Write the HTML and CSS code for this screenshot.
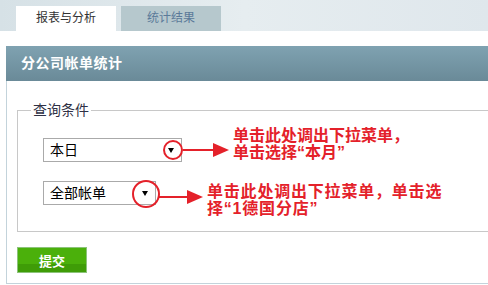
FILE: index.html
```html
<!DOCTYPE html>
<html lang="zh-CN">
    <head>
        <meta charset="UTF-8" />
        <meta name="viewport" content="width=device-width, initial-scale=1.0" />
        <title>分公司帐单统计</title>
        <link rel="stylesheet" href="styles.css">
    </head>
    <body>
        <div class="tabs">
            <div class="tab active">报表与分析</div>
            <div class="tab">统计结果</div>
        </div>

        <div class="panel">
            <div class="panel-title">分公司帐单统计</div>
            <div class="panel-body">
                <fieldset class="query">
                    <legend>查询条件</legend>

                    <!-- period select -->
                    <div class="row row-first">
                        <div class="select select-period">
                            <span>本日</span>
                            <svg class="ring ring-small" width="22" height="22" viewBox="0 0 22 22">
                                <circle cx="11" cy="11" r="9" />
                            </svg>
                        </div>
                        <svg class="arrow" width="46" height="24" viewBox="0 0 46 24">
                            <line x1="0" y1="12" x2="32" y2="12" />
                            <polygon points="30,5 46,12 30,19" />
                        </svg>
                        <p class="note note-first">单击此处调出下拉菜单，<br />单击选择“本月”</p>
                    </div>

                    <!-- bill type select -->
                    <div class="row row-second">
                        <div class="select select-bill">
                            <span>全部帐单</span>
                            <svg class="ring ring-big" width="30" height="30" viewBox="0 0 30 30">
                                <circle cx="15" cy="15" r="13" />
                            </svg>
                        </div>
                        <svg class="arrow arrow-low" width="45" height="24" viewBox="0 0 45 24">
                            <line x1="0" y1="16" x2="31" y2="16" />
                            <polygon points="29,9 45,16 29,23" />
                        </svg>
                        <p class="note note-second">单击此处调出下拉菜单，单击选<br />择“1德国分店”</p>
                    </div>
                </fieldset>

                <button class="submit">提交</button>
            </div>
        </div>
    </body>
</html>
```

FILE: styles.css
```css
body {
    margin: 0;
    width: 488px;
    height: 285px;
    overflow: hidden;
    background: #fff;
    font-family: "Liberation Sans", "Noto Sans CJK SC", sans-serif;
}

/* top tab strip */
.tabs {
    height: 31px;
    padding-left: 16px;
    display: flex;
    align-items: flex-end;
    gap: 5px;
    background: linear-gradient(to right, #d6e1e6, #e6edf0 50%, #dfe7ec);
}
.tab {
    width: 100px;
    height: 25px;
    line-height: 25px;
    text-align: center;
    font-size: 12px;
    color: #5b7a99;
    background: #b6c8cd;
}
.tab.active {
    background: #fff;
    color: #333;
}

/* panel, its right edge is cut off by the window */
.panel {
    margin: 15px 0 0 6px;
}
.panel-title {
    height: 35px;
    line-height: 35px;
    padding-left: 15px;
    font-size: 14px;
    font-weight: bold;
    letter-spacing: 0.5px;
    color: #fff;
    background: linear-gradient(#7fa2b1, #6a8a98);
}
.panel-body {
    border-left: 1px solid #c3d3db;
    border-bottom: 1px solid #c3d3db;
    padding: 21px 0 10px 10px;
}

/* query fieldset */
.query {
    margin: 0;
    padding: 0 0 26px 25px;
    border: 1px solid #c8c8c8;
    border-right: none;
}
.query legend {
    margin-left: -12px;
    padding: 0 2px;
    font-size: 14px;
    line-height: 16px;
    color: #2f3145;
}
.row {
    display: flex;
    align-items: flex-start;
    height: 24px;
}
.row-first {
    margin-top: 20px;
}
.row-second {
    margin-top: 19px;
}
.select {
    position: relative;
    box-sizing: border-box;
    height: 24px;
    border: 1px solid #aaa;
    background: #fff;
    font-size: 14px;
    line-height: 22px;
    padding-left: 6px;
    color: #000;
    flex-shrink: 0;
}
.select::after {
    content: "";
    position: absolute;
    right: 7px;
    top: 9px;
    border-left: 3px solid transparent;
    border-right: 3px solid transparent;
    border-top: 5px solid #000;
}
.select-period {
    width: 139px;
}
.select-bill {
    width: 113px;
}

/* red annotations */
.ring {
    position: absolute;
}
.ring circle {
    fill: none;
    stroke: #e4212a;
    stroke-width: 2;
}
.ring-small {
    left: 118px;
    top: 0px;
}
.ring-big {
    left: 87px;
    top: -3px;
}
.arrow {
    flex-shrink: 0;
    margin-left: 1px;
}
.arrow-low {
    margin-left: 2px;
}
.arrow line {
    stroke: #e4212a;
    stroke-width: 2;
}
.arrow polygon {
    fill: #e4212a;
}
.note {
    margin: 0 0 0 4px;
    font-size: 16px;
    line-height: 17px;
    font-weight: bold;
    color: #e4212a;
    white-space: nowrap;
}
.note-first {
    margin-top: -11px;
}
.note-second {
    margin-top: 2px;
    letter-spacing: 0.8px;
}

/* submit button */
.submit {
    display: block;
    margin-top: 15px;
    width: 70px;
    height: 26px;
    padding: 0;
    border: 1px solid #8cc37a;
    background: linear-gradient(#4bb00b 0, #4bb00b 68%, #3f9c07 68%, #3f9c07 100%);
    color: #fff;
    font-family: "Noto Sans CJK SC", sans-serif;
    font-size: 13px;
    font-weight: bold;
    cursor: pointer;
}
```
